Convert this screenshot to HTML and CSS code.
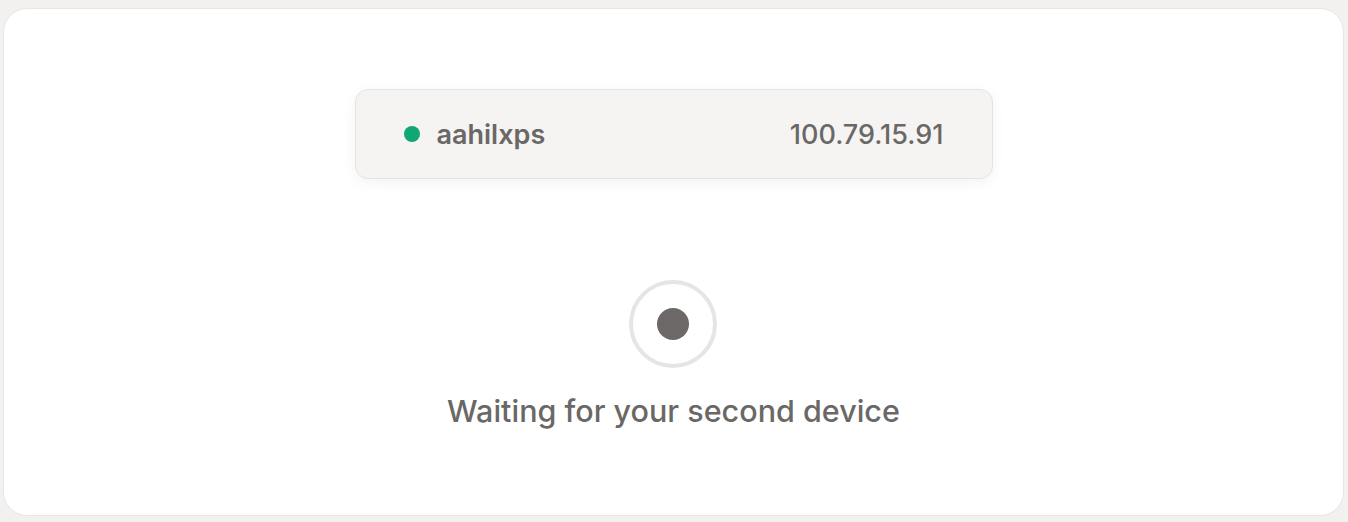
FILE: index.html
```html
<!DOCTYPE html>
<html>
<head>
<meta charset="utf-8">
<link rel="stylesheet" href="styles.css">
</head>
<body>
<div class="page">
  <div class="card">
    <div class="device">
      <div class="device-name"><span class="status-dot"></span><span>aahilxps</span></div>
      <div class="device-ip">100.79.15.91</div>
    </div>
    <div class="waiting">
      <div class="ring"><span class="ring-dot"></span></div>
      <div class="waiting-text">Waiting for your second device</div>
    </div>
  </div>
</div>
</body>
</html>
```
FILE: styles.css
```css
html, body {
  margin: 0;
  padding: 0;
  background: #f3f1ef;
  font-family: Inter, "Noto Sans", sans-serif;
}
.page {
  padding: 8px 4px 6px 3px;
  height: 522px;
  box-sizing: border-box;
}
.card {
  height: 100%;
  box-sizing: border-box;
  background: #ffffff;
  border: 1px solid #e9e7e4;
  border-radius: 24px;
  display: flex;
  flex-direction: column;
  align-items: center;
  padding-top: 80px;
}
.device {
  width: 638px;
  height: 90px;
  box-sizing: border-box;
  background: #f5f4f2;
  border: 1px solid #e6e4e1;
  border-radius: 13px;
  box-shadow: 0 4px 14px rgba(0, 0, 0, 0.05);
  display: flex;
  align-items: center;
  justify-content: space-between;
  padding: 0 48px 0 48px;
  color: #6a6866;
  font-size: 27px;
}
.device-name {
  display: flex;
  align-items: center;
  gap: 17px;
  font-weight: 600;
}
.status-dot {
  width: 16px;
  height: 16px;
  border-radius: 50%;
  background: #10a774;
}
.device-ip {
  font-weight: 500;
}
.waiting {
  margin-top: 101px;
  display: flex;
  flex-direction: column;
  align-items: center;
  gap: 24px;
}
.ring {
  width: 88px;
  height: 88px;
  box-sizing: border-box;
  border: 4px solid #e6e5e4;
  border-radius: 50%;
  display: flex;
  align-items: center;
  justify-content: center;
}
.ring-dot {
  width: 32px;
  height: 32px;
  border-radius: 50%;
  background: #6b6867;
}
.waiting-text {
  font-size: 30.5px;
  line-height: 38px;
  color: #6a6866;
  font-weight: 500;
}
```
